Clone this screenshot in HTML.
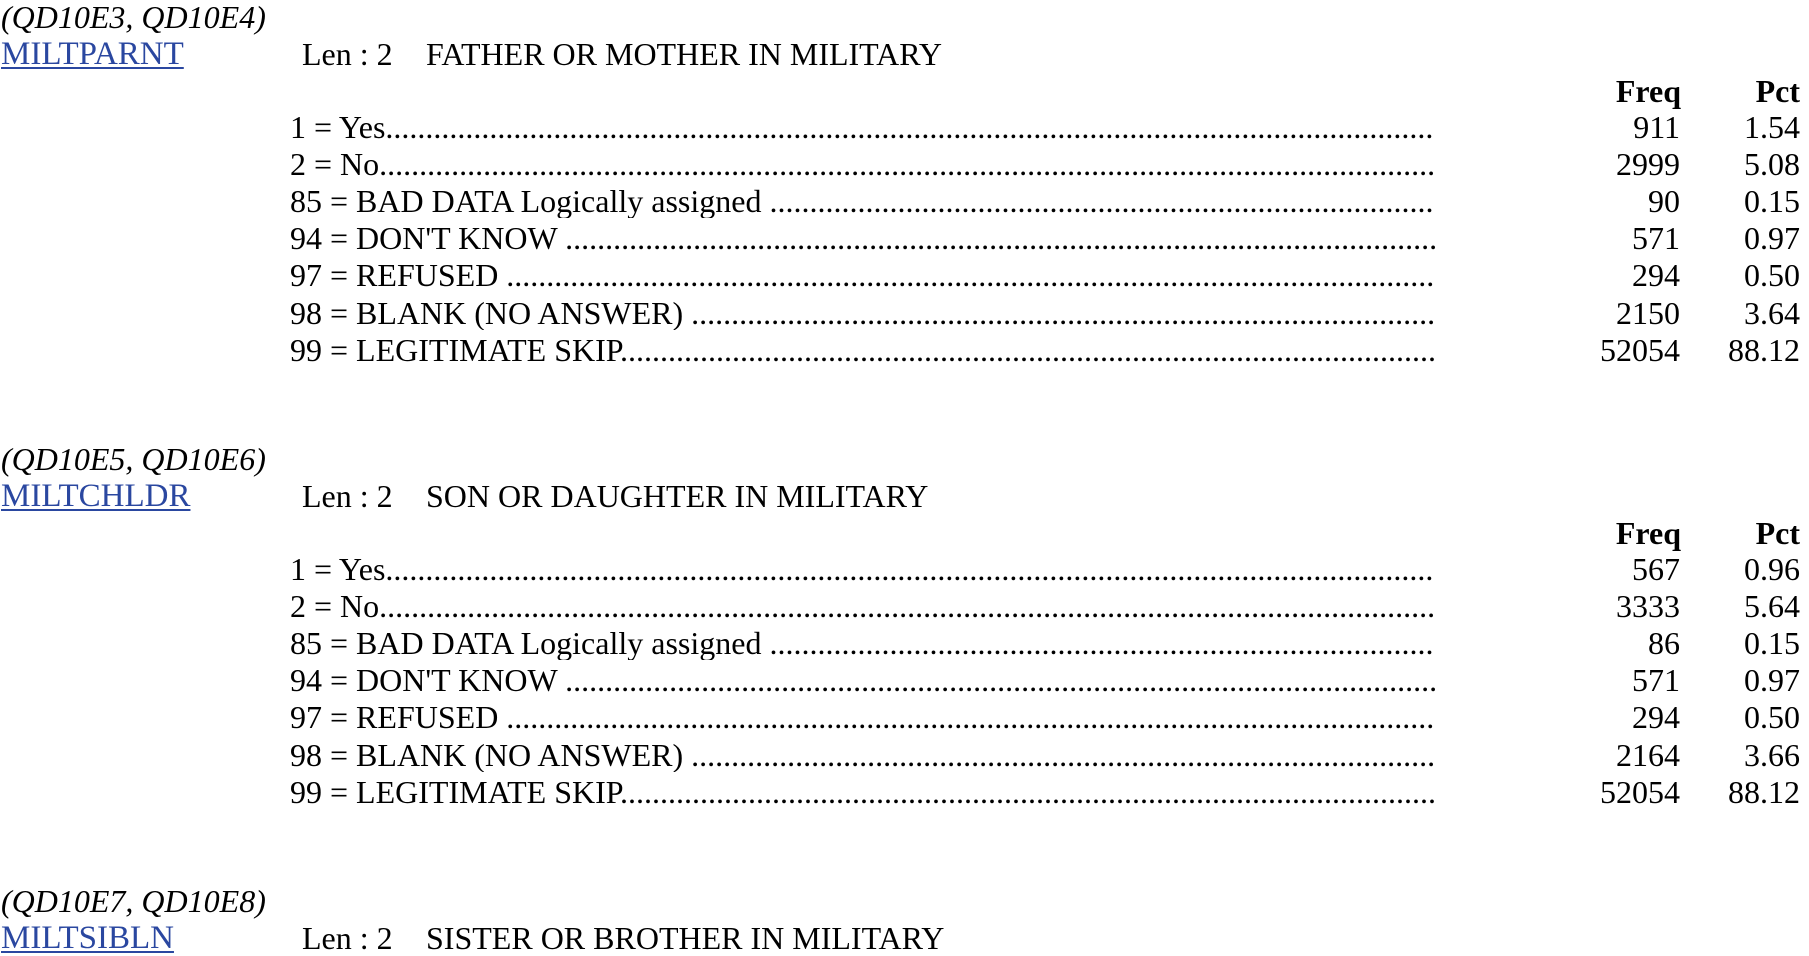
<!DOCTYPE html>
<html><head><meta charset="utf-8"><style>
html,body{margin:0;padding:0;background:#fff;width:1809px;height:956px;overflow:hidden;position:relative}
.t{position:absolute;font-family:"Liberation Serif",serif;font-size:32px;line-height:33px;color:#000;white-space:nowrap}
.i{font-style:italic}
.a{font-size:33px;color:#2a47a0;text-decoration:underline;text-decoration-thickness:2px;text-underline-offset:3px}
.b{font-weight:bold}
.r{text-align:right}
.lab{overflow:hidden;width:1145px}
</style></head><body>
<div id="c"></div>
<script>
var secs=[
 {y:0,q:"(QD10E3, QD10E4)",n:"MILTPARNT",t:"FATHER OR MOTHER IN MILITARY",rows:[["1 = Yes","911","1.54"],["2 = No","2999","5.08"],["85 = BAD DATA Logically assigned ","90","0.15"],["94 = DON'T KNOW ","571","0.97"],["97 = REFUSED ","294","0.50"],["98 = BLANK (NO ANSWER) ","2150","3.64"],["99 = LEGITIMATE SKIP","52054","88.12"]]},
 {y:442,q:"(QD10E5, QD10E6)",n:"MILTCHLDR",t:"SON OR DAUGHTER IN MILITARY",rows:[["1 = Yes","567","0.96"],["2 = No","3333","5.64"],["85 = BAD DATA Logically assigned ","86","0.15"],["94 = DON'T KNOW ","571","0.97"],["97 = REFUSED ","294","0.50"],["98 = BLANK (NO ANSWER) ","2164","3.66"],["99 = LEGITIMATE SKIP","52054","88.12"]]},
 {y:884,q:"(QD10E7, QD10E8)",n:"MILTSIBLN",t:"SISTER OR BROTHER IN MILITARY",rows:[]}
];
var h="",dots=new Array(300).join(".");
function d(cls,x,base,txt,w){h+='<div class="t '+cls+'" style="left:'+x+'px;top:'+(base-27.5)+'px'+(w?';width:'+w+'px':'')+'">'+txt+'</div>';}
secs.forEach(function(s){
 var y=s.y;
 d("i",1,y+28.5,s.q);
 d("a",1,y+65.5,s.n);
 d("",302,y+65.5,"Len : 2");
 d("",426,y+65.5,s.t);
 if(s.rows.length){
  d("b r",1500,y+102.5,"Freq",181);
  d("b r",1700,y+102.5,"Pct",100);
  s.rows.forEach(function(r,k){
   var b=y+138.5+k*37.1;
   d("lab",290,b,r[0]+dots);
   d("r",1500,b,r[1],180);
   d("r",1700,b,r[2],100);
  });
 }
});
document.getElementById("c").innerHTML=h;
</script>
</body></html>
